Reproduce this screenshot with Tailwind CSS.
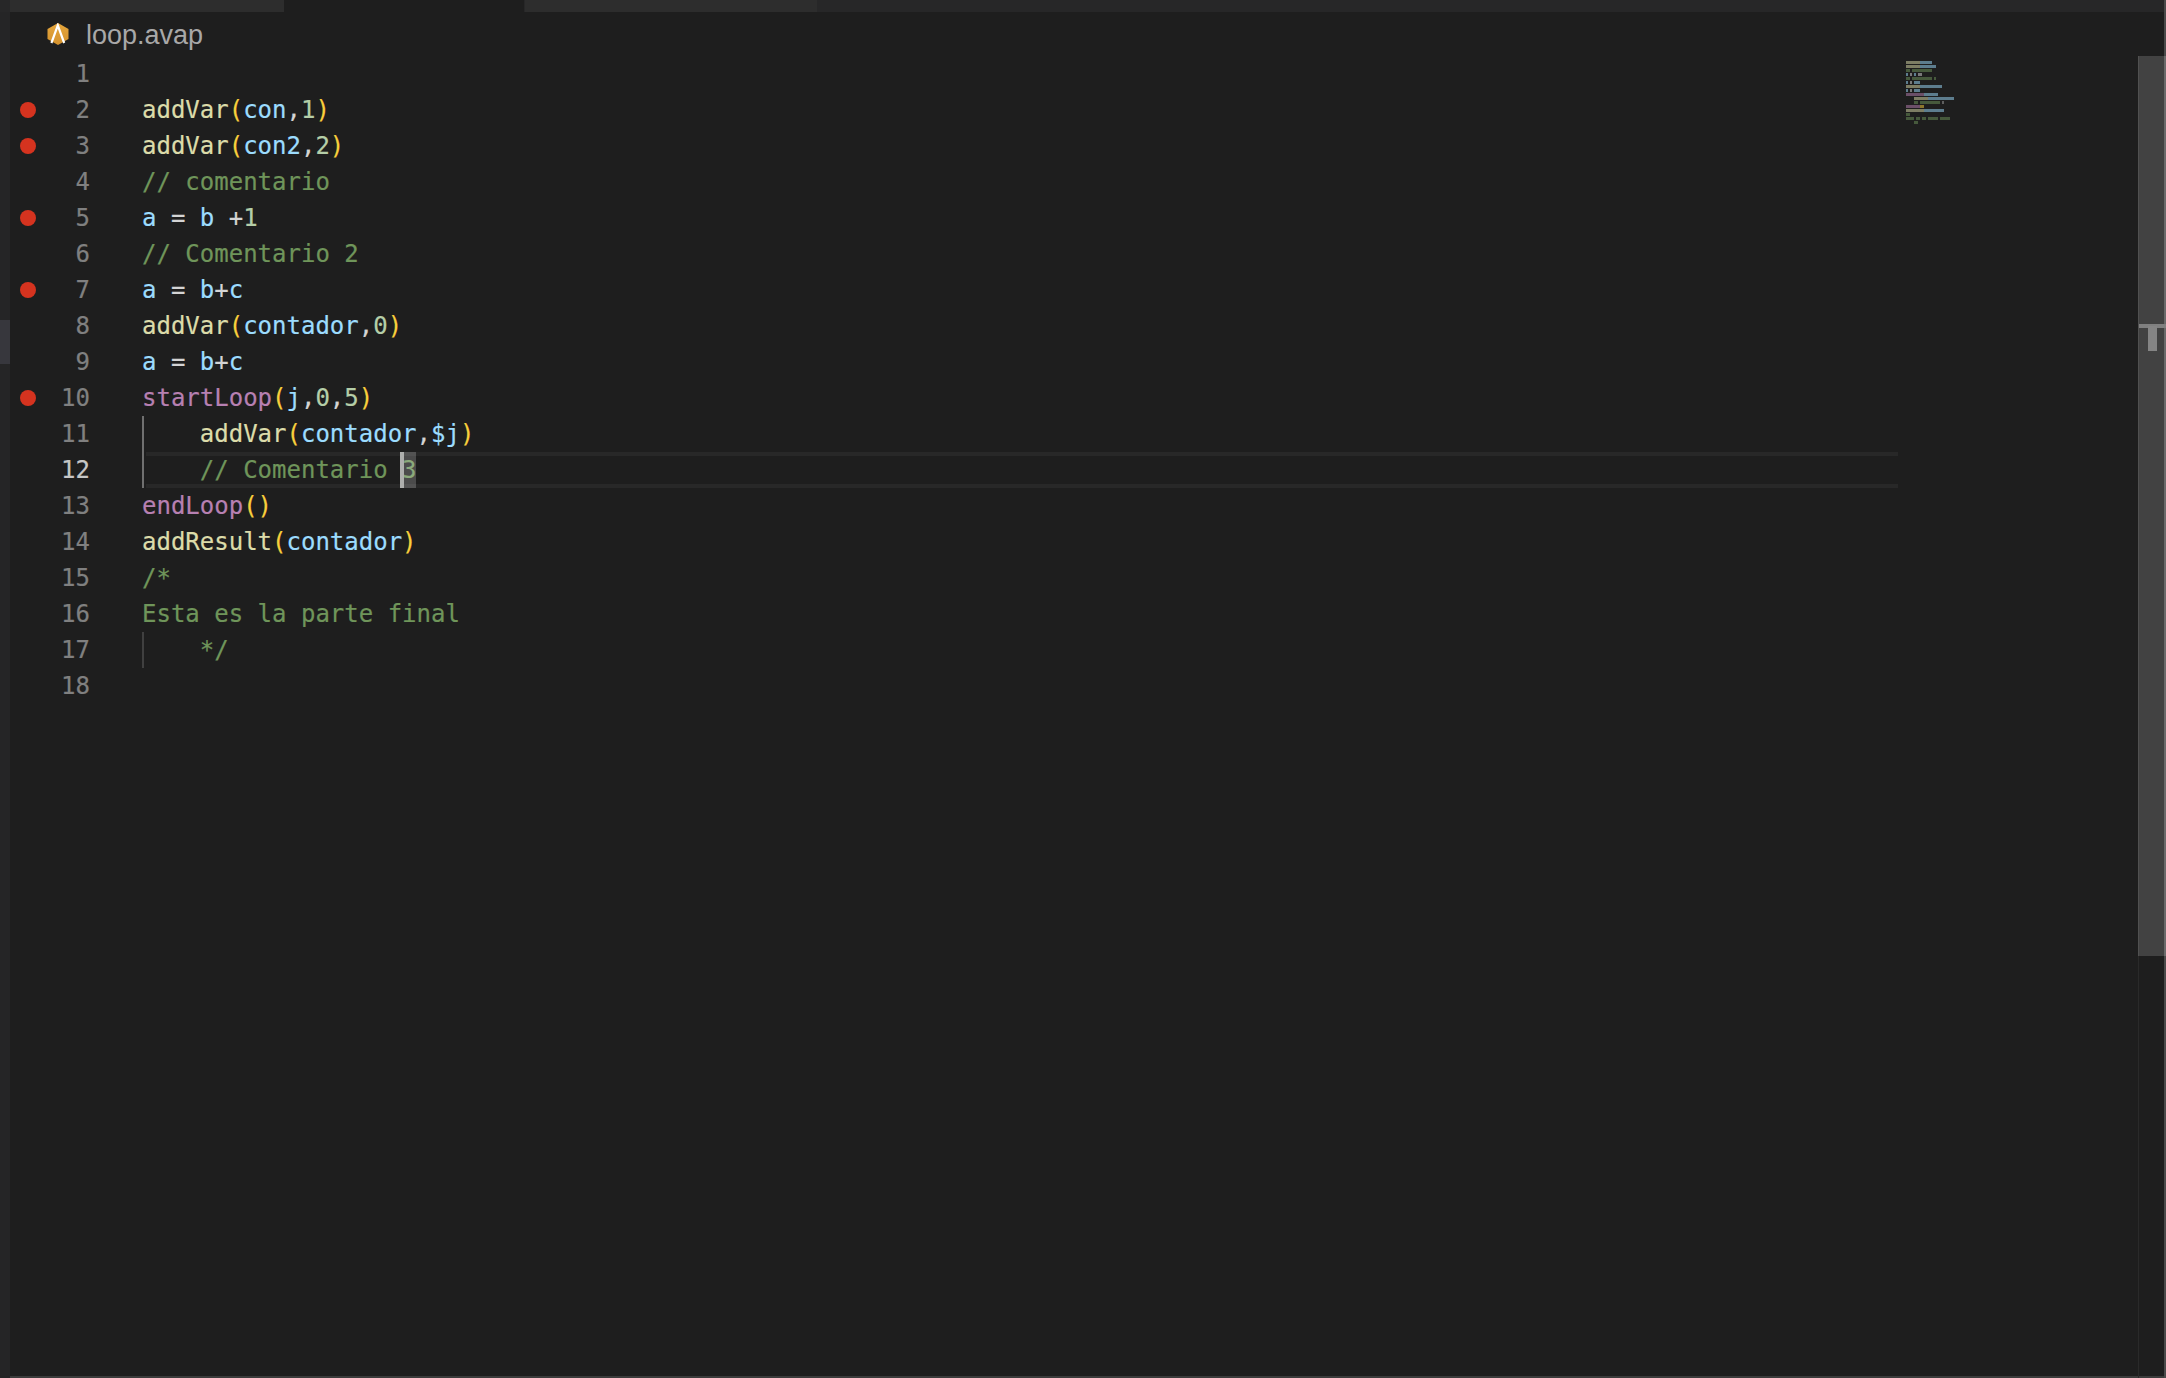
<!DOCTYPE html>
<html lang="en">
<head>
<meta charset="utf-8">
<title>loop.avap</title>
<script src="https://cdn.jsdelivr.net/npm/@tailwindcss/browser@4"></script>
</head>
<body class="bg-[#1e1e1e]">
<div class="relative w-[2166px] h-[1378px] overflow-hidden bg-[#1e1e1e] flex flex-col font-['DejaVu_Sans_Mono',monospace]">

  <!-- Tab strip -->
  <div class="flex h-[12px] shrink-0 bg-[#272728] pl-[10px]">
    <div class="w-[274px] bg-[#2d2d2d]"></div>
    <div class="w-[240px] bg-[#1e1e1e]"></div>
    <div class="w-[292px] ml-[1px] bg-[#2d2d2d]"></div>
  </div>

  <div class="flex flex-1 min-h-0">
    <!-- Activity bar edge -->
    <div class="w-[10px] shrink-0 bg-[#252526] flex flex-col">
      <div class="h-[308px]"></div>
      <div class="h-[44px] bg-[#37373d]"></div>
    </div>

    <div class="flex-1 flex flex-col border-b-2 border-[#3c3c3c]">
      <!-- Breadcrumb -->
      <div class="flex items-center h-[44px] shrink-0 pl-[37px]">
        <svg class="w-[22px] h-[22px] shrink-0" viewBox="0 0 22 22">
          <defs>
            <linearGradient id="avap" x1="0" y1="0" x2="0" y2="1">
              <stop offset="0" stop-color="#e5a63c"/>
              <stop offset="1" stop-color="#d4922e"/>
            </linearGradient>
          </defs>
          <path d="M11 0 L21.5 6 V16 L11 22 L.5 16 V6 Z" fill="url(#avap)"/>
          <path d="M4.4 20 L10.8 2.4 L17.2 20" fill="none" stroke="#ffffff" stroke-width="2.2"/>
        </svg>
        <span class="ml-[17px] pt-[2px] text-[27px] leading-none text-[#a8a8a8] font-['Liberation_Sans',sans-serif]">loop.avap</span>
      </div>

      <!-- Code -->
      <div class="flex flex-col text-[24px] leading-[36px] whitespace-pre text-[#d4d4d4] [-webkit-text-stroke:0.2px]">
        <div class="flex h-9"><div class="w-[36px] flex items-center justify-center"></div><div class="w-[44px] text-right text-[#808080]">1</div><div class="pl-[52px]"></div></div>
        <div class="flex h-9"><div class="w-[36px] flex items-center justify-center"><span class="size-4 rounded-full bg-[#d5331f]"></span></div><div class="w-[44px] text-right text-[#808080]">2</div><div class="pl-[52px]"><span class="text-[#dcdcaa]">addVar</span><span class="text-[#f8cf3c]">(</span><span class="text-[#9cdcfe]">con</span>,<span class="text-[#b5cea8]">1</span><span class="text-[#f8cf3c]">)</span></div></div>
        <div class="flex h-9"><div class="w-[36px] flex items-center justify-center"><span class="size-4 rounded-full bg-[#d5331f]"></span></div><div class="w-[44px] text-right text-[#808080]">3</div><div class="pl-[52px]"><span class="text-[#dcdcaa]">addVar</span><span class="text-[#f8cf3c]">(</span><span class="text-[#9cdcfe]">con2</span>,<span class="text-[#b5cea8]">2</span><span class="text-[#f8cf3c]">)</span></div></div>
        <div class="flex h-9"><div class="w-[36px] flex items-center justify-center"></div><div class="w-[44px] text-right text-[#808080]">4</div><div class="pl-[52px] text-[#6f955a]">// comentario</div></div>
        <div class="flex h-9"><div class="w-[36px] flex items-center justify-center"><span class="size-4 rounded-full bg-[#d5331f]"></span></div><div class="w-[44px] text-right text-[#808080]">5</div><div class="pl-[52px]"><span class="text-[#9cdcfe]">a</span> = <span class="text-[#9cdcfe]">b</span> +<span class="text-[#b5cea8]">1</span></div></div>
        <div class="flex h-9"><div class="w-[36px] flex items-center justify-center"></div><div class="w-[44px] text-right text-[#808080]">6</div><div class="pl-[52px] text-[#6f955a]">// Comentario 2</div></div>
        <div class="flex h-9"><div class="w-[36px] flex items-center justify-center"><span class="size-4 rounded-full bg-[#d5331f]"></span></div><div class="w-[44px] text-right text-[#808080]">7</div><div class="pl-[52px]"><span class="text-[#9cdcfe]">a</span> = <span class="text-[#9cdcfe]">b</span>+<span class="text-[#9cdcfe]">c</span></div></div>
        <div class="flex h-9"><div class="w-[36px] flex items-center justify-center"></div><div class="w-[44px] text-right text-[#808080]">8</div><div class="pl-[52px]"><span class="text-[#dcdcaa]">addVar</span><span class="text-[#f8cf3c]">(</span><span class="text-[#9cdcfe]">contador</span>,<span class="text-[#b5cea8]">0</span><span class="text-[#f8cf3c]">)</span></div></div>
        <div class="flex h-9"><div class="w-[36px] flex items-center justify-center"></div><div class="w-[44px] text-right text-[#808080]">9</div><div class="pl-[52px]"><span class="text-[#9cdcfe]">a</span> = <span class="text-[#9cdcfe]">b</span>+<span class="text-[#9cdcfe]">c</span></div></div>
        <div class="flex h-9"><div class="w-[36px] flex items-center justify-center"><span class="size-4 rounded-full bg-[#d5331f]"></span></div><div class="w-[44px] text-right text-[#808080]">10</div><div class="pl-[52px]"><span class="text-[#b780b2]">startLoop</span><span class="text-[#f8cf3c]">(</span><span class="text-[#9cdcfe]">j</span>,<span class="text-[#b5cea8]">0</span>,<span class="text-[#b5cea8]">5</span><span class="text-[#f8cf3c]">)</span></div></div>
        <div class="relative flex h-9"><div class="w-[36px] flex items-center justify-center"></div><div class="w-[44px] text-right text-[#808080]">11</div><div class="pl-[52px]">    <span class="text-[#dcdcaa]">addVar</span><span class="text-[#f8cf3c]">(</span><span class="text-[#9cdcfe]">contador</span>,<span class="text-[#9cdcfe]">$j</span><span class="text-[#f8cf3c]">)</span></div>
          <span class="absolute left-[132px] top-0 w-[2px] h-9 bg-[#707070]"></span>
        </div>
        <div class="relative flex h-9"><div class="w-[36px] flex items-center justify-center"></div><div class="w-[44px] text-right text-[#c6c6c6]">12</div><div class="pl-[52px] text-[#6f955a]">    // Comentario 3</div>
          <span class="absolute left-[132px] top-0 w-[2px] h-9 bg-[#707070]"></span>
          <span class="absolute left-[136px] top-0 w-[1752px] h-9 border-y-4 border-[#282828]"></span>
          <span class="absolute left-[390px] top-0 w-[16px] h-9 bg-white/20"></span>
          <span class="absolute left-[390px] top-0 w-[4px] h-9 bg-[#aeafad]"></span>
        </div>
        <div class="flex h-9"><div class="w-[36px] flex items-center justify-center"></div><div class="w-[44px] text-right text-[#808080]">13</div><div class="pl-[52px]"><span class="text-[#b780b2]">endLoop</span><span class="text-[#f8cf3c]">()</span></div></div>
        <div class="flex h-9"><div class="w-[36px] flex items-center justify-center"></div><div class="w-[44px] text-right text-[#808080]">14</div><div class="pl-[52px]"><span class="text-[#dcdcaa]">addResult</span><span class="text-[#f8cf3c]">(</span><span class="text-[#9cdcfe]">contador</span><span class="text-[#f8cf3c]">)</span></div></div>
        <div class="flex h-9"><div class="w-[36px] flex items-center justify-center"></div><div class="w-[44px] text-right text-[#808080]">15</div><div class="pl-[52px] text-[#6f955a]">/*</div></div>
        <div class="flex h-9"><div class="w-[36px] flex items-center justify-center"></div><div class="w-[44px] text-right text-[#808080]">16</div><div class="pl-[52px] text-[#6f955a]">Esta es la parte final</div></div>
        <div class="relative flex h-9"><div class="w-[36px] flex items-center justify-center"></div><div class="w-[44px] text-right text-[#808080]">17</div><div class="pl-[52px] text-[#6f955a]">    */</div>
          <span class="absolute left-[132px] top-0 w-[2px] h-9 bg-[#404040]"></span>
        </div>
        <div class="flex h-9"><div class="w-[36px] flex items-center justify-center"></div><div class="w-[44px] text-right text-[#808080]">18</div><div class="pl-[52px]"></div></div>
      </div>
    </div>
  </div>

  <!-- Minimap -->
  <div class="absolute left-[1906px] top-[60px] flex flex-col opacity-50 blur-[0.7px]">
    <div class="flex h-[4px] py-[0.5px]"><i class="w-[14px] bg-[#dcdcaa]"></i><i class="w-[12px] bg-[#9cdcfe]"></i></div>
    <div class="flex h-[4px] py-[0.5px]"><i class="w-[14px] bg-[#dcdcaa]"></i><i class="w-[16px] bg-[#9cdcfe]"></i></div>
    <div class="flex h-[4px] py-[0.5px]"><i class="w-[4px] bg-[#6f955a]"></i><i class="ml-[2px] w-[20px] bg-[#6f955a]"></i></div>
    <div class="flex h-[4px] py-[0.5px]"><i class="w-[2px] bg-[#9cdcfe]"></i><i class="ml-[2px] w-[2px] bg-[#d4d4d4]"></i><i class="ml-[2px] w-[2px] bg-[#9cdcfe]"></i><i class="ml-[2px] w-[4px] bg-[#d4d4d4]"></i></div>
    <div class="flex h-[4px] py-[0.5px]"><i class="w-[4px] bg-[#6f955a]"></i><i class="ml-[2px] w-[20px] bg-[#6f955a]"></i><i class="ml-[2px] w-[2px] bg-[#6f955a]"></i></div>
    <div class="flex h-[4px] py-[0.5px]"><i class="w-[2px] bg-[#9cdcfe]"></i><i class="ml-[2px] w-[2px] bg-[#d4d4d4]"></i><i class="ml-[2px] w-[6px] bg-[#9cdcfe]"></i></div>
    <div class="flex h-[4px] py-[0.5px]"><i class="w-[14px] bg-[#dcdcaa]"></i><i class="w-[22px] bg-[#9cdcfe]"></i></div>
    <div class="flex h-[4px] py-[0.5px]"><i class="w-[2px] bg-[#9cdcfe]"></i><i class="ml-[2px] w-[2px] bg-[#d4d4d4]"></i><i class="ml-[2px] w-[6px] bg-[#9cdcfe]"></i></div>
    <div class="flex h-[4px] py-[0.5px]"><i class="w-[18px] bg-[#b780b2]"></i><i class="w-[14px] bg-[#9cdcfe]"></i></div>
    <div class="flex h-[4px] py-[0.5px] pl-[8px]"><i class="w-[14px] bg-[#dcdcaa]"></i><i class="w-[26px] bg-[#9cdcfe]"></i></div>
    <div class="flex h-[4px] py-[0.5px] pl-[8px]"><i class="w-[4px] bg-[#6f955a]"></i><i class="ml-[2px] w-[20px] bg-[#6f955a]"></i><i class="ml-[2px] w-[2px] bg-[#a0a0a0]"></i></div>
    <div class="flex h-[4px] py-[0.5px]"><i class="w-[14px] bg-[#b780b2]"></i><i class="w-[4px] bg-[#f8cf3c]"></i></div>
    <div class="flex h-[4px] py-[0.5px]"><i class="w-[18px] bg-[#dcdcaa]"></i><i class="w-[20px] bg-[#9cdcfe]"></i></div>
    <div class="flex h-[4px] py-[0.5px]"><i class="w-[4px] bg-[#6f955a]"></i></div>
    <div class="flex h-[4px] py-[0.5px]"><i class="w-[8px] bg-[#6f955a]"></i><i class="ml-[2px] w-[4px] bg-[#6f955a]"></i><i class="ml-[2px] w-[4px] bg-[#6f955a]"></i><i class="ml-[2px] w-[10px] bg-[#6f955a]"></i><i class="ml-[2px] w-[10px] bg-[#6f955a]"></i></div>
    <div class="flex h-[4px] py-[0.5px] pl-[8px]"><i class="w-[4px] bg-[#6f955a]"></i></div>
  </div>

  <!-- Scrollbar and overview ruler -->
  <div class="absolute left-[2138px] top-[56px] w-[26px] h-[900px] bg-[#424242] border-l border-[#505050]"></div>
  <div class="absolute left-[2138px] top-[956px] bottom-0 w-px bg-[#2a2a2a]"></div>
  <div class="absolute right-0 top-0 w-[2px] h-[56px] bg-[#4a4a4a]"></div>
  <div class="absolute right-0 top-[56px] w-[2px] h-[900px] bg-[#6a6a6a]"></div>
  <div class="absolute right-0 top-[956px] bottom-0 w-[2px] bg-[#4a4a4a]"></div>
  <div class="absolute left-[2139px] right-0 top-[324px] h-[4px] bg-[#808080]"></div>
  <div class="absolute left-[2148px] top-[326px] w-[9px] h-[25px] bg-[#858585]"></div>
</div>
</body>
</html>
